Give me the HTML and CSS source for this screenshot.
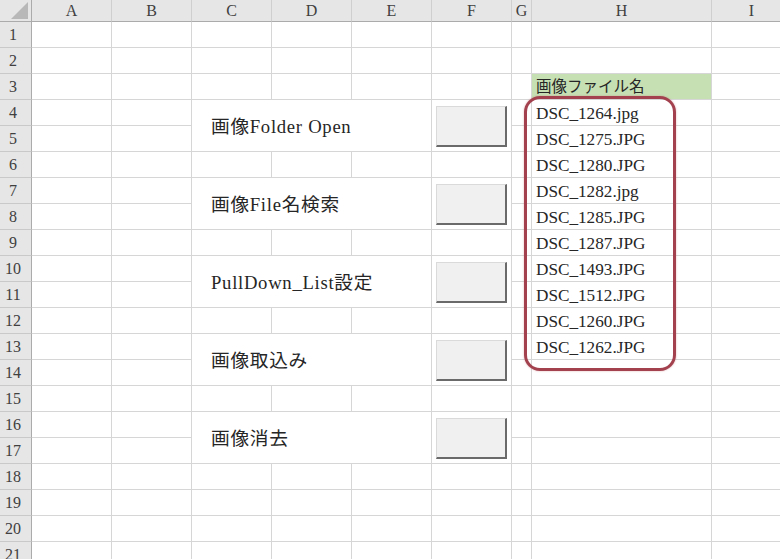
FILE: index.html
```html
<!DOCTYPE html>
<html lang="ja">
<head>
    <meta charset="UTF-8">
    <meta name="viewport" content="width=device-width, initial-scale=1.0">
    <title>画像ファイル取込み</title>
    <link rel="stylesheet" href="styles.css">
</head>
<body>

    <div class="sheet">
        <!-- column headers -->
        <div class="corner"><svg width="31" height="21" viewBox="0 0 31 21"><polygon points="11,19 28,19 28,2" fill="#b8b8b8"/></svg></div>
        <div class="ch">A</div><div class="ch">B</div><div class="ch">C</div><div class="ch">D</div><div class="ch">E</div><div class="ch">F</div><div class="ch">G</div><div class="ch">H</div><div class="ch">I</div>

        <!-- row 1 -->
        <div class="rh">1</div><div class="c"></div><div class="c"></div><div class="c"></div><div class="c"></div><div class="c"></div><div class="c"></div><div class="c"></div><div class="c"></div><div class="c"></div>
        <!-- row 2 -->
        <div class="rh">2</div><div class="c"></div><div class="c"></div><div class="c"></div><div class="c"></div><div class="c"></div><div class="c"></div><div class="c"></div><div class="c"></div><div class="c"></div>
        <!-- row 3 -->
        <div class="rh">3</div><div class="c"></div><div class="c"></div><div class="c"></div><div class="c"></div><div class="c"></div><div class="c"></div><div class="c"></div><div class="c head">画像ファイル名</div><div class="c"></div>
        <!-- row 4 -->
        <div class="rh">4</div><div class="c"></div><div class="c"></div>
        <div class="c label">画像Folder Open</div>
        <div class="c btn-cell"><button class="btn"></button></div>
        <div class="c"></div><div class="c file">DSC_1264.jpg</div><div class="c"></div>
        <!-- row 5 -->
        <div class="rh">5</div><div class="c"></div><div class="c"></div><div class="c"></div><div class="c file">DSC_1275.JPG</div><div class="c"></div>
        <!-- row 6 -->
        <div class="rh">6</div><div class="c"></div><div class="c"></div><div class="c"></div><div class="c"></div><div class="c"></div><div class="c"></div><div class="c"></div><div class="c file">DSC_1280.JPG</div><div class="c"></div>
        <!-- row 7 -->
        <div class="rh">7</div><div class="c"></div><div class="c"></div>
        <div class="c label">画像File名検索</div>
        <div class="c btn-cell"><button class="btn"></button></div>
        <div class="c"></div><div class="c file">DSC_1282.jpg</div><div class="c"></div>
        <!-- row 8 -->
        <div class="rh">8</div><div class="c"></div><div class="c"></div><div class="c"></div><div class="c file">DSC_1285.JPG</div><div class="c"></div>
        <!-- row 9 -->
        <div class="rh">9</div><div class="c"></div><div class="c"></div><div class="c"></div><div class="c"></div><div class="c"></div><div class="c"></div><div class="c"></div><div class="c file">DSC_1287.JPG</div><div class="c"></div>
        <!-- row 10 -->
        <div class="rh">10</div><div class="c"></div><div class="c"></div>
        <div class="c label">PullDown_List設定</div>
        <div class="c btn-cell"><button class="btn"></button></div>
        <div class="c"></div><div class="c file">DSC_1493.JPG</div><div class="c"></div>
        <!-- row 11 -->
        <div class="rh">11</div><div class="c"></div><div class="c"></div><div class="c"></div><div class="c file">DSC_1512.JPG</div><div class="c"></div>
        <!-- row 12 -->
        <div class="rh">12</div><div class="c"></div><div class="c"></div><div class="c"></div><div class="c"></div><div class="c"></div><div class="c"></div><div class="c"></div><div class="c file">DSC_1260.JPG</div><div class="c"></div>
        <!-- row 13 -->
        <div class="rh">13</div><div class="c"></div><div class="c"></div>
        <div class="c label">画像取込み</div>
        <div class="c btn-cell"><button class="btn"></button></div>
        <div class="c"></div><div class="c file">DSC_1262.JPG</div><div class="c"></div>
        <!-- row 14 -->
        <div class="rh">14</div><div class="c"></div><div class="c"></div><div class="c"></div><div class="c"></div><div class="c"></div>
        <!-- row 15 -->
        <div class="rh">15</div><div class="c"></div><div class="c"></div><div class="c"></div><div class="c"></div><div class="c"></div><div class="c"></div><div class="c"></div><div class="c"></div><div class="c"></div>
        <!-- row 16 -->
        <div class="rh">16</div><div class="c"></div><div class="c"></div>
        <div class="c label">画像消去</div>
        <div class="c btn-cell"><button class="btn"></button></div>
        <div class="c"></div><div class="c"></div><div class="c"></div>
        <!-- row 17 -->
        <div class="rh">17</div><div class="c"></div><div class="c"></div><div class="c"></div><div class="c"></div><div class="c"></div>
        <!-- rows 18 - 21 -->
        <div class="rh">18</div><div class="c"></div><div class="c"></div><div class="c"></div><div class="c"></div><div class="c"></div><div class="c"></div><div class="c"></div><div class="c"></div><div class="c"></div>
        <div class="rh">19</div><div class="c"></div><div class="c"></div><div class="c"></div><div class="c"></div><div class="c"></div><div class="c"></div><div class="c"></div><div class="c"></div><div class="c"></div>
        <div class="rh">20</div><div class="c"></div><div class="c"></div><div class="c"></div><div class="c"></div><div class="c"></div><div class="c"></div><div class="c"></div><div class="c"></div><div class="c"></div>
        <div class="rh">21</div><div class="c"></div><div class="c"></div><div class="c"></div><div class="c"></div><div class="c"></div><div class="c"></div><div class="c"></div><div class="c"></div><div class="c"></div>

        <!-- rounded frame drawn over the file list -->
        <div class="callout"></div>
    </div>

</body>
</html>
```

FILE: styles.css
```css
* {
    box-sizing: border-box;
}

body {
    margin: 0;
    overflow: hidden;
    background-color: #fff;
    font-family: "Liberation Serif", "Noto Sans CJK JP", serif;
    color: #262626;
}

.sheet {
    position: relative;
    display: grid;
    grid-template-columns: 32px repeat(6, 80px) 20px 180px 80px;
    grid-template-rows: 22px;
    grid-auto-rows: 26px;
    width: 792px;
}

/* headers */
.corner {
    background-color: #e6e6e6;
    border-right: 1px solid #ababab;
    border-bottom: 1px solid #ababab;
}

.corner svg {
    display: block;
}

.ch {
    background-color: #e6e6e6;
    border-right: 1px solid #cfcfcf;
    border-bottom: 1px solid #ababab;
    text-align: center;
    font-size: 16px;
    line-height: 21px;
    color: #404040;
}

.rh {
    background-color: #e6e6e6;
    border-right: 1px solid #ababab;
    border-bottom: 1px solid #c9c9c9;
    text-align: center;
    padding-right: 5px;
    font-size: 16px;
    line-height: 26px;
    color: #404040;
}

/* cells */
.c {
    border-right: 1px solid #d6d6d6;
    border-bottom: 1px solid #d6d6d6;
    white-space: nowrap;
}

.label {
    grid-column: span 3;
    grid-row: span 2;
    display: flex;
    align-items: center;
    padding: 0 0 3px 19px;
    font-size: 18.7px;
    letter-spacing: 0.7px;
}

.btn-cell {
    grid-row: span 2;
    padding: 6px 0 0 4px;
}

.btn {
    display: block;
    width: 71px;
    height: 41px;
    padding: 0;
    background-color: #f0f0f0;
    border-top: 1px solid #dadada;
    border-left: 1px solid #dadada;
    border-right: 2px solid #6a6a6a;
    border-bottom: 2px solid #6a6a6a;
}

.head {
    background-color: #c6e0b4;
    padding-left: 4px;
    font-size: 15.5px;
    line-height: 26px;
}

.file {
    padding: 1px 0 0 4px;
    font-size: 17.2px;
    line-height: 25px;
}

.callout {
    position: absolute;
    left: 524px;
    top: 96px;
    width: 152px;
    height: 275px;
    border: 3px solid #a3414e;
    border-radius: 16px;
    box-shadow: 0 0 2px rgba(200, 90, 100, 0.5);
}
```
